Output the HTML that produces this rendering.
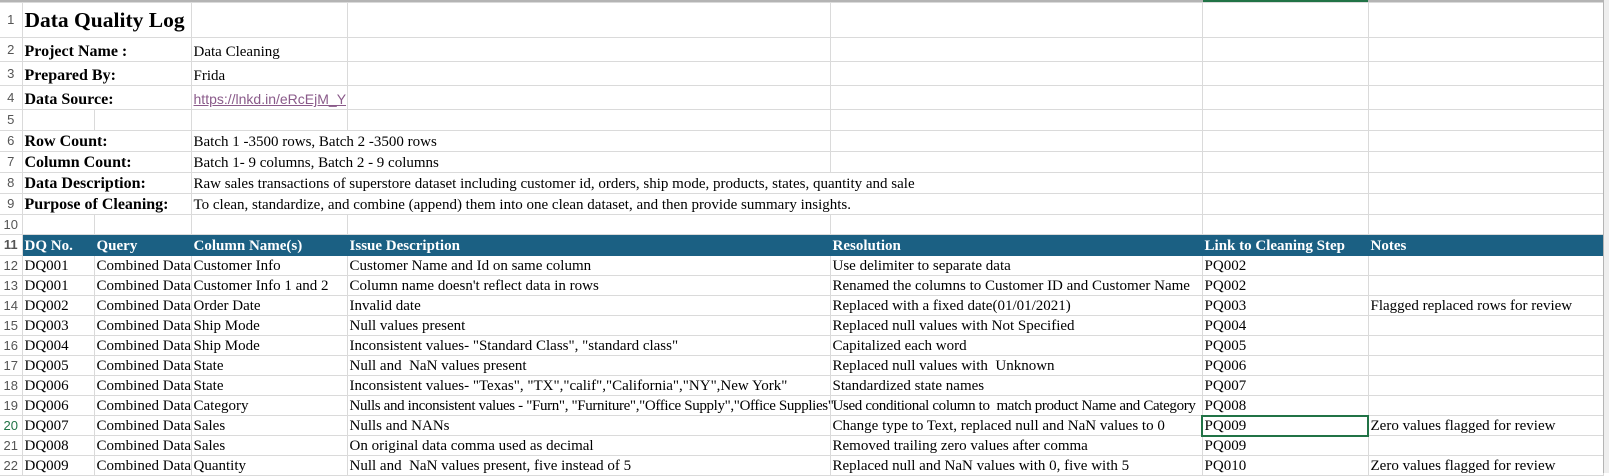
<!DOCTYPE html>
<html><head><meta charset="utf-8"><style>
body{margin:0;width:1609px;height:473px;overflow:hidden;background:#fff;position:relative}
#top{position:absolute;left:0;top:0;width:1604px;height:2px;background:#b4b4b4}
#right{position:absolute;left:1603px;top:0;width:6px;height:473px;background:#eeeeee;border-left:1px solid #b4b4b4}
table{position:absolute;left:0;top:2px;width:1603px;border-collapse:collapse;table-layout:fixed;font-family:"Liberation Serif",serif;font-size:15px;color:#000}
td{border:1px solid #dadada;padding:0 0 0 2px;white-space:nowrap;overflow:visible;vertical-align:bottom;line-height:18px}
td.n{font-family:"Liberation Sans",sans-serif;font-size:13px;color:#555;text-align:center;padding:0;border-left:none;vertical-align:middle}
td.b{font-weight:bold;font-size:16px}
td.c{letter-spacing:-0.35px}
tr.h td{background:#1b6083;color:#fff;font-weight:bold;border-color:#1b6083}
tr.h td.n{background:#fff;color:#555;border-color:#dadada}
td.t{font-weight:bold;font-size:21.5px;vertical-align:middle}
a{color:#8a5a8a;font-family:"Liberation Sans",sans-serif;font-size:14px;text-decoration:underline}
td.sel{outline:2px solid #217346;outline-offset:-1px}
</style></head><body>
<div id="top"></div>
<table>
<colgroup><col style="width:22px"><col style="width:72px"><col style="width:97px"><col style="width:156px"><col style="width:483px"><col style="width:372px"><col style="width:166px"><col style="width:235px"></colgroup>
<tr style="height:35px"><td class="n">1</td><td class="t" colspan="2">Data Quality Log</td><td></td><td></td><td></td><td></td><td></td></tr>
<tr style="height:24px"><td class="n">2</td><td class="b" colspan="2">Project Name :</td><td>Data Cleaning</td><td></td><td></td><td></td><td></td></tr>
<tr style="height:24px"><td class="n">3</td><td class="b" colspan="2">Prepared By:</td><td>Frida</td><td></td><td></td><td></td><td></td></tr>
<tr style="height:24px"><td class="n">4</td><td class="b" colspan="2">Data Source:</td><td><a>https://lnkd.in/eRcEjM_Y</a></td><td></td><td></td><td></td><td></td></tr>
<tr style="height:21px"><td class="n">5</td><td></td><td></td><td></td><td></td><td></td><td></td><td></td></tr>
<tr style="height:21px"><td class="n">6</td><td class="b" colspan="2">Row Count:</td><td colspan="2">Batch 1 -3500 rows, Batch 2 -3500 rows</td><td></td><td></td><td></td></tr>
<tr style="height:21px"><td class="n">7</td><td class="b" colspan="2">Column Count:</td><td colspan="2">Batch 1- 9 columns, Batch 2 - 9 columns</td><td></td><td></td><td></td></tr>
<tr style="height:21px"><td class="n">8</td><td class="b" colspan="2">Data Description:</td><td colspan="3">Raw sales transactions of superstore dataset including customer id, orders, ship mode, products, states, quantity and sale</td><td></td><td></td></tr>
<tr style="height:21px"><td class="n">9</td><td class="b" colspan="2">Purpose of Cleaning:</td><td colspan="3">To clean, standardize, and combine (append) them into one clean dataset, and then provide summary insights.</td><td></td><td></td></tr>
<tr style="height:20px"><td class="n">10</td><td></td><td></td><td></td><td></td><td></td><td></td><td></td></tr>
<tr class="h" style="height:21px"><td class="n">11</td><td>DQ No.</td><td>Query</td><td>Column Name(s)</td><td>Issue Description</td><td>Resolution</td><td>Link to Cleaning Step</td><td>Notes</td></tr>
<tr style="height:20px"><td class="n">12</td><td>DQ001</td><td>Combined Data</td><td>Customer Info</td><td>Customer Name and Id on same column</td><td>Use delimiter to separate data</td><td>PQ002</td><td></td></tr>
<tr style="height:20px"><td class="n">13</td><td>DQ001</td><td>Combined Data</td><td>Customer Info 1 and 2</td><td>Column name doesn't reflect data in rows</td><td>Renamed the columns to Customer ID and Customer Name</td><td>PQ002</td><td></td></tr>
<tr style="height:20px"><td class="n">14</td><td>DQ002</td><td>Combined Data</td><td>Order Date</td><td>Invalid date</td><td>Replaced with a fixed date(01/01/2021)</td><td>PQ003</td><td>Flagged replaced rows for review</td></tr>
<tr style="height:20px"><td class="n">15</td><td>DQ003</td><td>Combined Data</td><td>Ship Mode</td><td>Null values present</td><td>Replaced null values with Not Specified</td><td>PQ004</td><td></td></tr>
<tr style="height:20px"><td class="n">16</td><td>DQ004</td><td>Combined Data</td><td>Ship Mode</td><td>Inconsistent values- "Standard Class", "standard class"</td><td>Capitalized each word</td><td>PQ005</td><td></td></tr>
<tr style="height:20px"><td class="n">17</td><td>DQ005</td><td>Combined Data</td><td>State</td><td>Null and&nbsp; NaN values present</td><td>Replaced null values with&nbsp; Unknown</td><td>PQ006</td><td></td></tr>
<tr style="height:20px"><td class="n">18</td><td>DQ006</td><td>Combined Data</td><td>State</td><td>Inconsistent values- "Texas", "TX","calif","California","NY",New York"</td><td>Standardized state names</td><td>PQ007</td><td></td></tr>
<tr style="height:20px"><td class="n">19</td><td>DQ006</td><td>Combined Data</td><td>Category</td><td class="c">Nulls and inconsistent values - "Furn", "Furniture","Office Supply","Office Supplies"</td><td class="c">Used conditional column to&nbsp; match product Name and Category</td><td>PQ008</td><td></td></tr>
<tr style="height:20px"><td class="n" style="color:#217346">20</td><td>DQ007</td><td>Combined Data</td><td>Sales</td><td>Nulls and NANs</td><td>Change type to Text, replaced null and NaN values to 0</td><td class="sel">PQ009</td><td>Zero values flagged for review</td></tr>
<tr style="height:20px"><td class="n">21</td><td>DQ008</td><td>Combined Data</td><td>Sales</td><td>On original data comma used as decimal</td><td>Removed trailing zero values after comma</td><td>PQ009</td><td></td></tr>
<tr style="height:20px"><td class="n">22</td><td>DQ009</td><td>Combined Data</td><td>Quantity</td><td>Null and&nbsp; NaN values present, five instead of 5</td><td>Replaced null and NaN values with 0, five with 5</td><td>PQ010</td><td>Zero values flagged for review</td></tr>
</table>
<div style="position:absolute;left:1203px;top:0;width:165px;height:2px;background:#217346"></div>
<div id="right"></div>
</body></html>
